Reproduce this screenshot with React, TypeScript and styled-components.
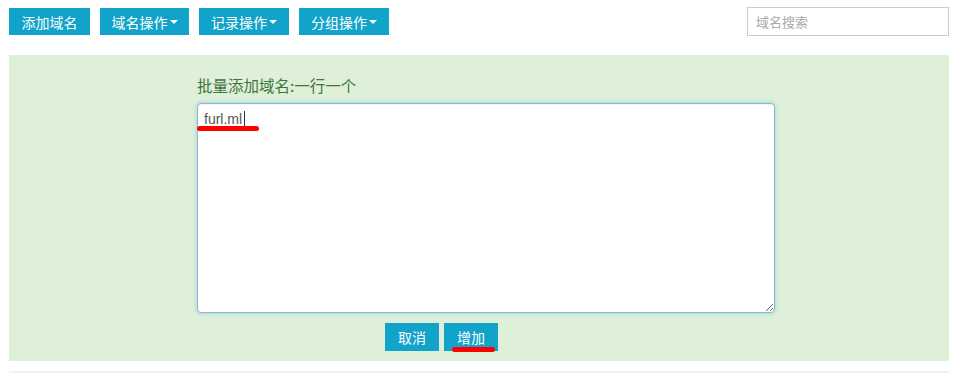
import React from "react";
import styled, { createGlobalStyle } from "styled-components";

const Global = createGlobalStyle`
  html, body { margin: 0; padding: 0; background: #fff; }
  body { font-family: "Liberation Sans", "Noto Sans CJK SC", sans-serif; }
  * { box-sizing: border-box; }
`;

const Page = styled.div`
  width: 963px;
  height: 373px;
  padding: 7px 14px 0 9px;
  overflow: hidden;
`;

const Toolbar = styled.div`
  display: flex;
  align-items: flex-start;
  justify-content: space-between;
  height: 48px;
`;

const BtnGroup = styled.div`
  display: flex;
  gap: 10px;
  padding-top: 1px;
`;

const Btn = styled.button<{ $w?: number }>`
  display: inline-flex;
  align-items: center;
  justify-content: center;
  height: 27px;
  width: ${(p) => (p.$w ? `${p.$w}px` : "auto")};
  padding: 0 10px;
  border: none;
  border-radius: 0;
  background: #12a3ca;
  color: #fff;
  font-family: "Noto Sans CJK SC", sans-serif;
  font-size: 14px;
  line-height: 1;
  white-space: nowrap;
  cursor: pointer;
`;

const Caret = styled.span`
  display: inline-block;
  flex: none;
  width: 0;
  height: 0;
  margin-left: 2px;
  border-top: 4px solid #fff;
  border-left: 4px solid transparent;
  border-right: 4px solid transparent;
`;

const Search = styled.input`
  width: 202px;
  height: 29px;
  border: 1px solid #ccc;
  padding: 0 8px;
  font-family: "Noto Sans CJK SC", sans-serif;
  font-size: 13px;
  color: #555;
  outline: none;
  &::placeholder { color: #aaa; }
`;

const Panel = styled.div`
  background: #dff0d8;
  height: 306px;
  padding: 20px 0 0 188px;
`;

const Label = styled.div`
  color: #3c763d;
  font-family: "Noto Sans CJK SC", sans-serif;
  font-size: 15.5px;
  line-height: 20px;
  height: 28px;
`;

const AreaWrap = styled.div`
  position: relative;
  width: 578px;
  height: 210px;
`;

const Area = styled.textarea`
  width: 578px;
  height: 210px;
  border: 1px solid #8fb6cf;
  border-radius: 4px;
  box-shadow: 0 0 5px rgba(102, 175, 233, 0.55), inset 0 1px 1px rgba(0, 0, 0, 0.05);
  padding: 5px 6px;
  font-family: "Liberation Sans", Arial, sans-serif;
  font-size: 14px;
  line-height: 20px;
  color: #555;
  outline: none;
  resize: both;
  display: block;
`;

const Mark = styled.span<{ $l: number; $t: number; $w: number }>`
  position: absolute;
  left: ${(p) => p.$l}px;
  top: ${(p) => p.$t}px;
  width: ${(p) => p.$w}px;
  height: 5px;
  border-radius: 3px;
  background: #f00;
`;

const TextCaret = styled.span`
  position: absolute;
  left: 47px;
  top: 8px;
  width: 1px;
  height: 15px;
  background: #333;
`;

const Actions = styled.div`
  display: flex;
  gap: 5px;
  margin: 10px 0 0 188px;
`;

const ActBtn = styled(Btn)`
  height: 28px;
  padding: 0 13px;
`;

const MarkHost = styled.div`
  position: relative;
`;

const Bottom = styled.div`
  margin-top: 10px;
  height: 2px;
  background: #f0f0f0;
`;

export default function App() {
  return (
    <Page>
      <Global />
      <Toolbar>
        <BtnGroup>
          <Btn $w={81}>添加域名</Btn>
          <Btn $w={89}>
            域名操作<Caret />
          </Btn>
          <Btn $w={90}>
            记录操作<Caret />
          </Btn>
          <Btn $w={90}>
            分组操作<Caret />
          </Btn>
        </BtnGroup>
        <Search placeholder="域名搜索" />
      </Toolbar>
      <Panel>
        <Label>批量添加域名:一行一个</Label>
        <AreaWrap>
          <Area defaultValue="furl.ml" readOnly />
          <TextCaret />
          <Mark $l={0} $t={23} $w={62} />
        </AreaWrap>
        <Actions>
          <ActBtn>取消</ActBtn>
          <MarkHost>
            <ActBtn>增加</ActBtn>
            <Mark $l={8} $t={24} $w={43} />
          </MarkHost>
        </Actions>
      </Panel>
      <Bottom />
    </Page>
  );
}
